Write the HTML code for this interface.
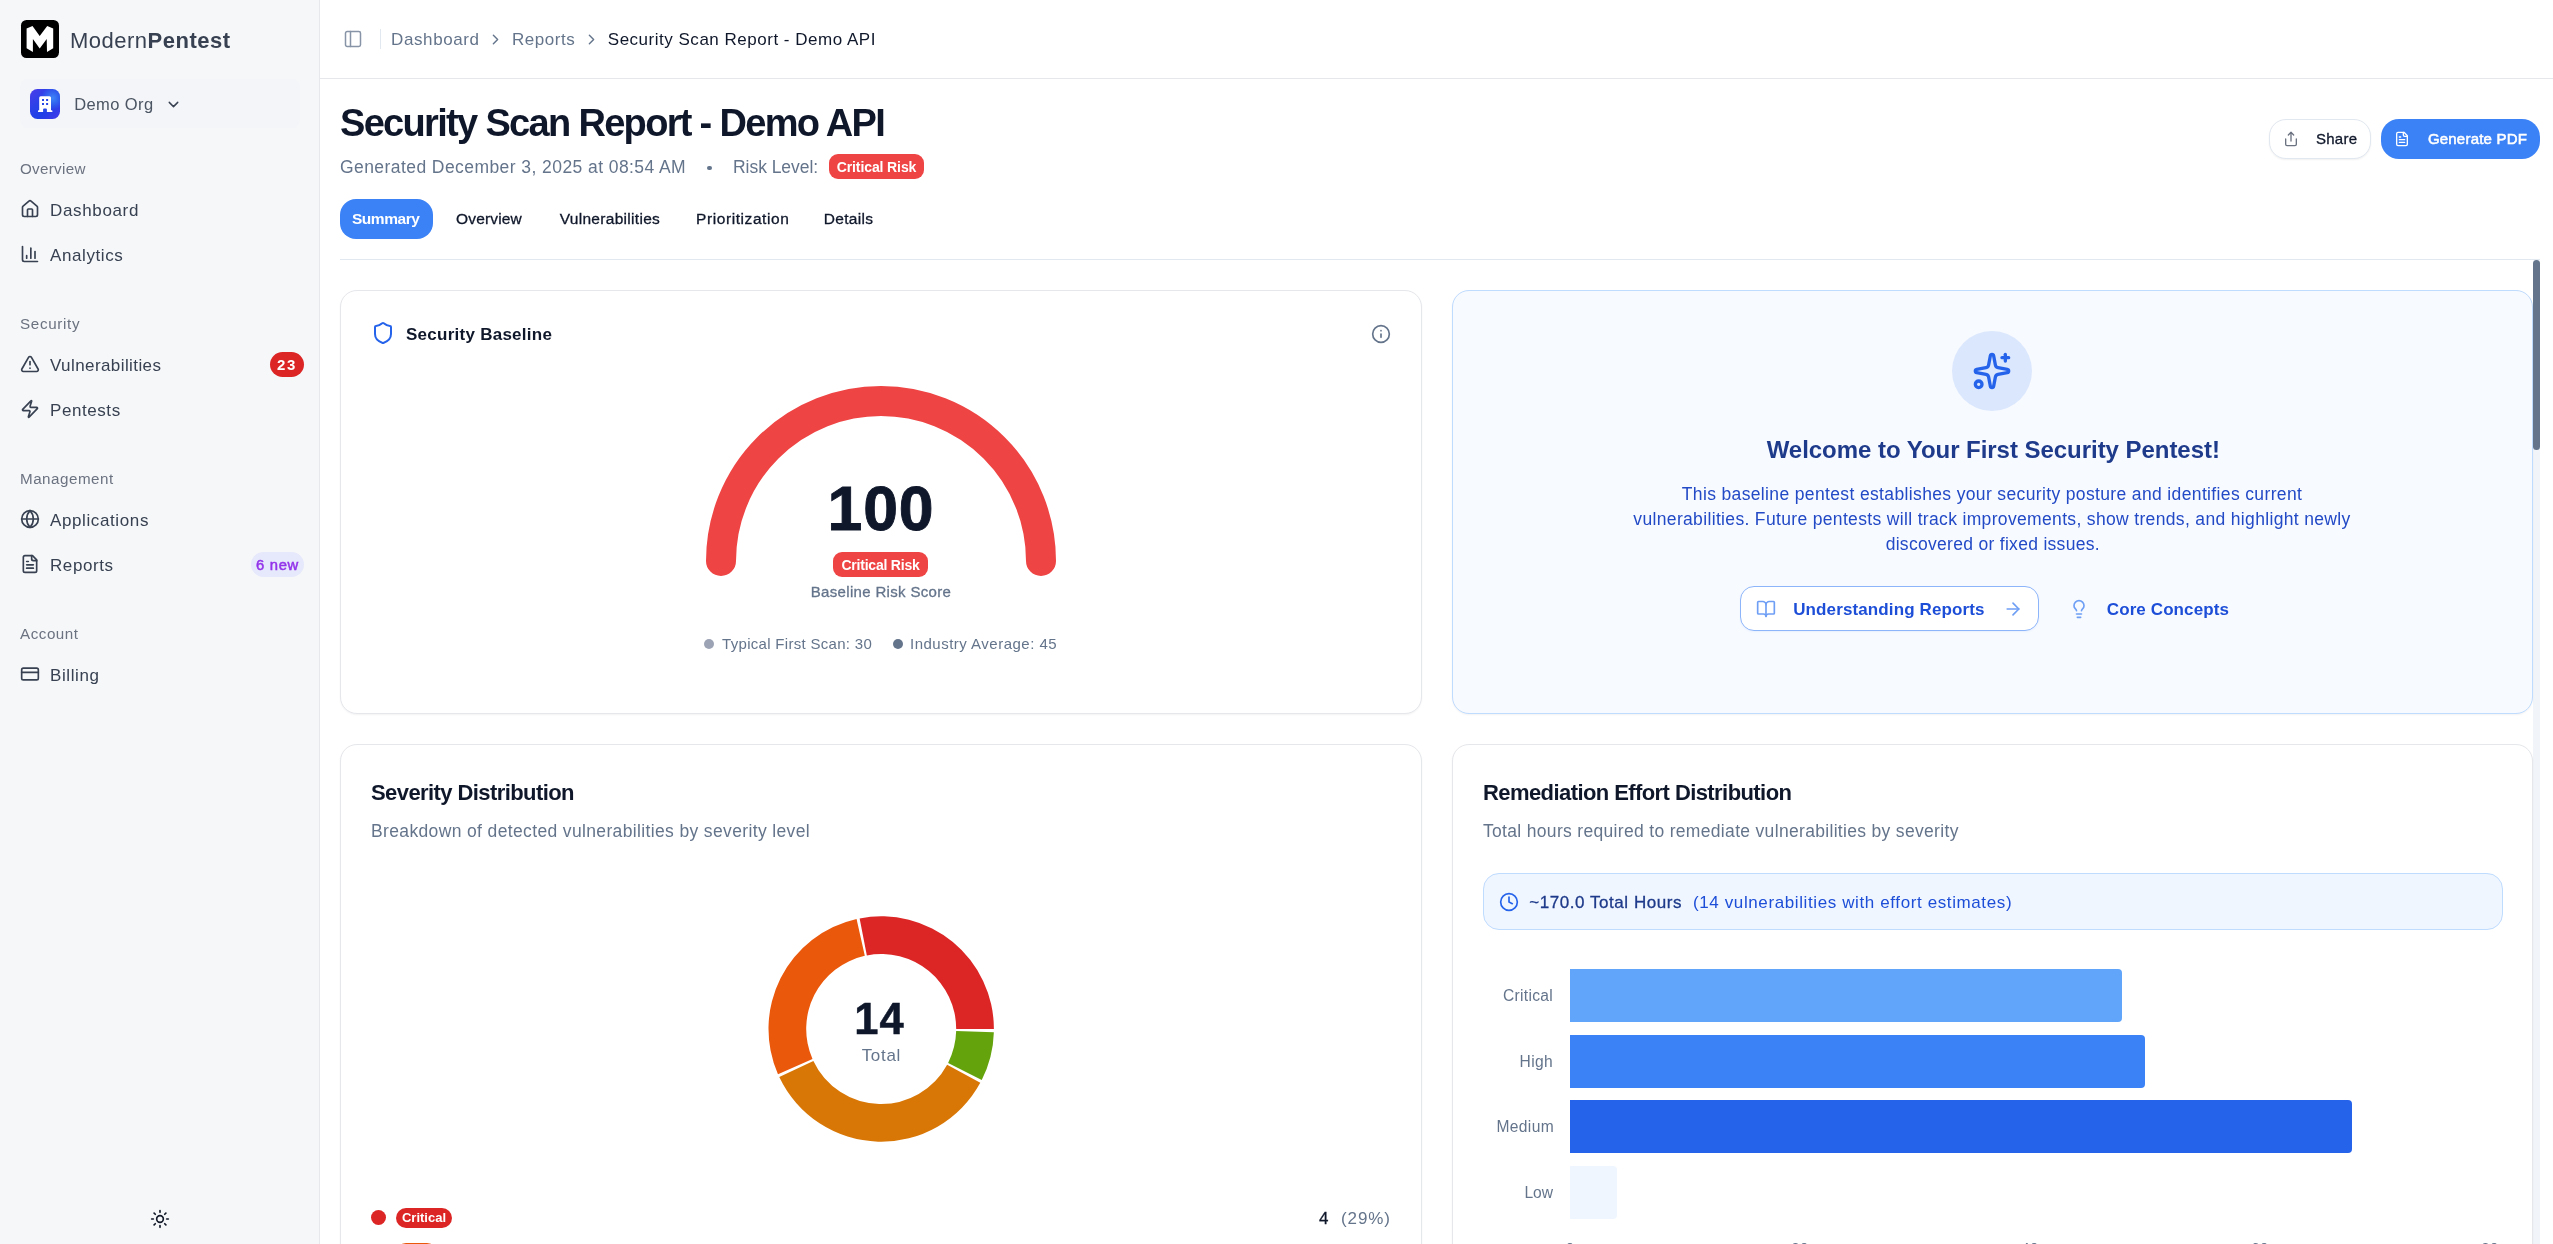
<!DOCTYPE html>
<html lang="en">
<head>
<meta charset="utf-8">
<title>Security Scan Report - Demo API</title>
<style>
*{box-sizing:border-box;margin:0;padding:0}
html,body{width:2553px;height:1244px;overflow:hidden;background:#fff}
body{font-family:"Liberation Sans",sans-serif;color:#0f172a;position:relative}
.abs{position:absolute}
.t{position:absolute;white-space:nowrap}
svg{display:block;overflow:visible}
#sidebar{position:absolute;left:0;top:0;width:320px;height:1244px;background:#f6f7f9;border-right:1px solid #e6e8ec}
.card{position:absolute;background:#fff;border:1px solid #e5e7eb;border-radius:17px;box-shadow:0 1px 2px rgba(15,23,42,.05)}
.pill{position:absolute;border-radius:999px}
</style>
</head>
<body>
<div id="root" style="position:absolute;left:0;top:0;width:2553px;height:1244px;will-change:transform;background:#fff">

<div id="sidebar">
<div class="abs" style="left:21px;top:20px;width:38px;height:38px;border-radius:5.500px;background:#000"></div>
<svg class="abs" style="left:0;top:0" width="80" height="70" viewBox="0 0 80 70"><path d="M26.600 28.500L32.500 26 39.700 36 47.200 26 53.200 28.500V48.200L47 52 46.700 39.100 39.700 48.600 32.900 39.100V52L26.600 48.200Z" fill="#fff"/></svg>
<div class="t" id="logo" style="left:70px;top:22.7px;height:35px;line-height:35px;font-size:22px;letter-spacing:0.5px;color:#374151">Modern<b>Pentest</b></div>
<div class="abs" style="left:20px;top:79px;width:280px;height:49px;border-radius:8px;background:#f4f5f8"></div>
<div class="abs" style="left:30px;top:89px;width:30px;height:30px;border-radius:7.500px;background:radial-gradient(circle at 76% 30%,#3f86f7 0,rgba(63,134,247,0) 38%),linear-gradient(135deg,#4b3cea 0%,#2a41e8 38%,#1f3fe6 62%,#4538ea 100%)"></div>
<svg class="abs" style="left:30px;top:89px" width="30" height="30" viewBox="0 0 30 30"><path d="M9.200 8.700a1.500 1.500 0 0 1 1.500-1.500h8.800a1.500 1.500 0 0 1 1.500 1.500V21.300h.8a.6.6 0 0 1 .6.600V23H8v-1.100a.6.6 0 0 1 .6-.6h.6z" fill="#fff"/><path d="M12 10h2v2h-2zM16.100 10h2v2h-2zM12 13.900h2v2h-2zM16.100 13.900h2v2h-2zM13.100 20.400a1 1 0 0 1 1-1h1.800a1 1 0 0 1 1 1V23h-3.800z" fill="#2646e6"/></svg>
<div class="t" id="org" style="left:74.2px;top:90.7px;height:26px;line-height:26px;font-size:16.5px;letter-spacing:0.41px;color:#4b5563">Demo Org</div>
<svg class="abs" style="left:164.7px;top:96.2px" width="17" height="17" viewBox="0 0 24 24" fill="none" stroke="#374151" stroke-width="2" stroke-linecap="round" stroke-linejoin="round"><path d="m6 9 6 6 6-6"/></svg>
<div class="t" id="g1" style="left:20px;top:157.3px;height:24px;line-height:24px;font-size:15.2px;letter-spacing:0.3px;color:#6b7280">Overview</div>
<div class="t" id="g2" style="left:20px;top:312.3px;height:24px;line-height:24px;font-size:15.2px;letter-spacing:0.66px;color:#6b7280">Security</div>
<div class="t" id="g3" style="left:20px;top:467.3px;height:24px;line-height:24px;font-size:15.2px;letter-spacing:0.5px;color:#6b7280">Management</div>
<div class="t" id="g4" style="left:20px;top:622.3px;height:24px;line-height:24px;font-size:15.2px;letter-spacing:0.52px;color:#6b7280">Account</div>
<svg class="abs" style="left:20px;top:199.0px" width="20" height="20" viewBox="0 0 24 24" fill="none" stroke="#374151" stroke-width="2" stroke-linecap="round" stroke-linejoin="round"><path d="M15 21v-8a1 1 0 0 0-1-1h-4a1 1 0 0 0-1 1v8"/><path d="M3 10a2 2 0 0 1 .709-1.528l7-5.999a2 2 0 0 1 2.582 0l7 5.999A2 2 0 0 1 21 10v9a2 2 0 0 1-2 2H5a2 2 0 0 1-2-2z"/></svg>
<div class="t" id="n1" style="left:50px;top:196.5px;height:27px;line-height:27px;font-size:17px;letter-spacing:0.65px;color:#374151">Dashboard</div>
<svg class="abs" style="left:20px;top:244.0px" width="20" height="20" viewBox="0 0 24 24" fill="none" stroke="#374151" stroke-width="2" stroke-linecap="round" stroke-linejoin="round"><path d="M3 3v16a2 2 0 0 0 2 2h16"/><path d="M18 17V9"/><path d="M13 17V5"/><path d="M8 17v-3"/></svg>
<div class="t" id="n2" style="left:50px;top:241.5px;height:27px;line-height:27px;font-size:17px;letter-spacing:0.59px;color:#374151">Analytics</div>
<svg class="abs" style="left:20px;top:354.0px" width="20" height="20" viewBox="0 0 24 24" fill="none" stroke="#374151" stroke-width="2" stroke-linecap="round" stroke-linejoin="round"><path d="m21.730 18-8-14a2 2 0 0 0-3.480 0l-8 14A2 2 0 0 0 4 21h16a2 2 0 0 0 1.730-3"/><path d="M12 9v4"/><path d="M12 17h.01"/></svg>
<div class="t" id="n3" style="left:50px;top:351.5px;height:27px;line-height:27px;font-size:17px;letter-spacing:0.41px;color:#374151">Vulnerabilities</div>
<svg class="abs" style="left:20px;top:399.0px" width="20" height="20" viewBox="0 0 24 24" fill="none" stroke="#374151" stroke-width="2" stroke-linecap="round" stroke-linejoin="round"><path d="M4 14a1 1 0 0 1-.78-1.630l9.900-10.200a.5.5 0 0 1 .86.460l-1.920 6.020A1 1 0 0 0 13 10h7a1 1 0 0 1 .78 1.630l-9.900 10.200a.5.5 0 0 1-.86-.460l1.920-6.020A1 1 0 0 0 11 14z"/></svg>
<div class="t" id="n4" style="left:50px;top:396.5px;height:27px;line-height:27px;font-size:17px;letter-spacing:0.57px;color:#374151">Pentests</div>
<svg class="abs" style="left:20px;top:509.0px" width="20" height="20" viewBox="0 0 24 24" fill="none" stroke="#374151" stroke-width="2" stroke-linecap="round" stroke-linejoin="round"><circle cx="12" cy="12" r="10"/><path d="M12 2a14.500 14.500 0 0 0 0 20 14.500 14.500 0 0 0 0-20"/><path d="M2 12h20"/></svg>
<div class="t" id="n5" style="left:50px;top:506.5px;height:27px;line-height:27px;font-size:17px;letter-spacing:0.61px;color:#374151">Applications</div>
<svg class="abs" style="left:20px;top:554.0px" width="20" height="20" viewBox="0 0 24 24" fill="none" stroke="#374151" stroke-width="2" stroke-linecap="round" stroke-linejoin="round"><path d="M15 2H6a2 2 0 0 0-2 2v16a2 2 0 0 0 2 2h12a2 2 0 0 0 2-2V7Z"/><path d="M14 2v4a2 2 0 0 0 2 2h4"/><path d="M10 9H8"/><path d="M16 13H8"/><path d="M16 17H8"/></svg>
<div class="t" id="n6" style="left:50px;top:551.5px;height:27px;line-height:27px;font-size:17px;letter-spacing:0.58px;color:#374151">Reports</div>
<svg class="abs" style="left:20px;top:664.0px" width="20" height="20" viewBox="0 0 24 24" fill="none" stroke="#374151" stroke-width="2" stroke-linecap="round" stroke-linejoin="round"><rect width="20" height="14" x="2" y="5" rx="2"/><path d="M2 10h20"/></svg>
<div class="t" id="n7" style="left:50px;top:661.5px;height:27px;line-height:27px;font-size:17px;letter-spacing:0.6px;color:#374151">Billing</div>
<div class="pill" style="left:270px;top:352px;width:34px;height:25px;background:#dc2626"></div>
<div class="t" id="bd23" style="left:270px;top:352.5px;height:24px;line-height:24px;font-size:15px;letter-spacing:1.6px;color:#fff;width:34px;text-align:center;font-weight:700">23</div>
<div class="pill" style="left:251px;top:552px;width:53px;height:25px;background:#e6e8fb"></div>
<div class="t" id="bd6" style="left:251px;top:552.5px;height:24px;line-height:24px;font-size:14.8px;letter-spacing:0.7px;color:#9333ea;width:53px;text-align:center;-webkit-text-stroke:.3px currentColor;-webkit-text-stroke:.5px currentColor">6 new</div>
<svg class="abs" style="left:150px;top:1209px" width="20" height="20" viewBox="0 0 24 24" fill="none" stroke="#111827" stroke-width="2" stroke-linecap="round" stroke-linejoin="round"><circle cx="12" cy="12" r="4"/><path d="M12 2v2"/><path d="M12 20v2"/><path d="m4.930 4.930 1.410 1.410"/><path d="m17.660 17.660 1.410 1.410"/><path d="M2 12h2"/><path d="M20 12h2"/><path d="m6.340 17.660-1.410 1.410"/><path d="m19.070 4.930-1.410 1.410"/></svg>
</div>
<div class="abs" style="left:320px;top:78px;width:2233px;height:1px;background:#e5e7eb"></div>
<svg class="abs" style="left:343px;top:29px" width="20" height="20" viewBox="0 0 24 24" fill="none" stroke="#8793a6" stroke-width="1.8" stroke-linecap="round" stroke-linejoin="round"><rect width="18" height="18" x="3" y="3" rx="2"/><path d="M9 3v18"/></svg>
<div class="abs" style="left:380px;top:29px;width:1px;height:20px;background:#e2e8f0"></div>
<div class="t" id="b1" style="left:391px;top:25.5px;height:27px;line-height:27px;font-size:17px;letter-spacing:0.61px;color:#64748b">Dashboard</div>
<svg class="abs" style="left:487px;top:31px" width="17" height="17" viewBox="0 0 24 24" fill="none" stroke="#64748b" stroke-width="2" stroke-linecap="round" stroke-linejoin="round"><path d="m9 18 6-6-6-6"/></svg>
<div class="t" id="b2" style="left:512px;top:25.5px;height:27px;line-height:27px;font-size:17px;letter-spacing:0.55px;color:#64748b">Reports</div>
<svg class="abs" style="left:582.5px;top:31px" width="17" height="17" viewBox="0 0 24 24" fill="none" stroke="#64748b" stroke-width="2" stroke-linecap="round" stroke-linejoin="round"><path d="m9 18 6-6-6-6"/></svg>
<div class="t" id="b3" style="left:607.8px;top:25.5px;height:27px;line-height:27px;font-size:17px;letter-spacing:0.51px;color:#0f172a">Security Scan Report - Demo API</div>
<div class="t" id="title" style="left:340px;top:97.6px;height:50px;line-height:50px;font-size:38px;letter-spacing:-1.68px;color:#0f172a;font-weight:700">Security Scan Report - Demo API</div>
<div class="t" id="sub1" style="left:340px;top:153px;height:28px;line-height:28px;font-size:17.5px;letter-spacing:0.43px;color:#64748b">Generated December 3, 2025 at 08:54 AM</div>
<div class="abs" style="left:707.300px;top:165.800px;width:4.400px;height:4.400px;border-radius:50%;background:#64748b"></div>
<div class="t" id="sub2" style="left:733px;top:153px;height:28px;line-height:28px;font-size:17.5px;letter-spacing:-0.05px;color:#64748b">Risk Level:</div>
<div class="abs" style="left:829px;top:154px;width:95px;height:25px;border-radius:9px;background:#ef4444"></div>
<div class="t" id="crit1" style="left:829px;top:155.5px;height:22px;line-height:22px;font-size:14px;letter-spacing:-0.11px;color:#fff;width:95px;text-align:center;font-weight:700">Critical Risk</div>
<div class="abs" style="left:2269px;top:119px;width:102px;height:40px;border:1px solid #e2e8f0;border-radius:17px;background:#fff;box-shadow:0 1px 2px rgba(15,23,42,.06)"></div>
<svg class="abs" style="left:2282.7px;top:130.5px" width="16" height="16" viewBox="0 0 24 24" fill="none" stroke="#6b7280" stroke-width="2" stroke-linecap="round" stroke-linejoin="round"><path d="M4 12v8a2 2 0 0 0 2 2h12a2 2 0 0 0 2-2v-8"/><path d="m16 6-4-4-4 4"/><path d="M12 2v13"/></svg>
<div class="t" id="share" style="left:2316px;top:127px;height:24px;line-height:24px;font-size:15px;letter-spacing:0.25px;color:#0f172a;-webkit-text-stroke:.3px currentColor">Share</div>
<div class="abs" style="left:2381px;top:119px;width:159px;height:40px;border-radius:18px;background:#3b82f6"></div>
<svg class="abs" style="left:2394px;top:130.6px" width="16" height="16" viewBox="0 0 24 24" fill="none" stroke="#fff" stroke-width="2" stroke-linecap="round" stroke-linejoin="round"><path d="M15 2H6a2 2 0 0 0-2 2v16a2 2 0 0 0 2 2h12a2 2 0 0 0 2-2V7Z"/><path d="M14 2v4a2 2 0 0 0 2 2h4"/><path d="M10 9H8"/><path d="M16 13H8"/><path d="M16 17H8"/></svg>
<div class="t" id="gen" style="left:2427.9px;top:127px;height:24px;line-height:24px;font-size:15px;letter-spacing:0.21px;color:#fff;-webkit-text-stroke:.3px currentColor;-webkit-text-stroke:.55px currentColor">Generate PDF</div>
<div class="abs" style="left:340px;top:199px;width:93px;height:40px;border-radius:16px;background:#3b82f6"></div>
<div class="t" id="tab1" style="left:352px;top:205.5px;height:25px;line-height:25px;font-size:15.5px;letter-spacing:-0.47px;color:#fff;font-weight:700">Summary</div>
<div class="t" id="tab2" style="left:456px;top:205.5px;height:25px;line-height:25px;font-size:15.5px;letter-spacing:0.16px;color:#0f172a;-webkit-text-stroke:.3px currentColor">Overview</div>
<div class="t" id="tab3" style="left:559.7px;top:205.5px;height:25px;line-height:25px;font-size:15.5px;letter-spacing:0.3px;color:#0f172a;-webkit-text-stroke:.3px currentColor">Vulnerabilities</div>
<div class="t" id="tab4" style="left:696px;top:205.5px;height:25px;line-height:25px;font-size:15.5px;letter-spacing:0.58px;color:#0f172a;-webkit-text-stroke:.3px currentColor">Prioritization</div>
<div class="t" id="tab5" style="left:823.7px;top:205.5px;height:25px;line-height:25px;font-size:15.5px;letter-spacing:0.33px;color:#0f172a;-webkit-text-stroke:.3px currentColor">Details</div>
<div class="abs" style="left:340px;top:259px;width:2200px;height:1px;background:#e2e8f0"></div>
<div class="abs" style="left:2533px;top:260px;width:7px;height:984px;background:#f1f5f9"></div>
<div class="card" style="left:340px;top:290px;width:1082px;height:424px"></div>
<svg class="abs" style="left:371px;top:321px" width="24" height="24" viewBox="0 0 24 24" fill="none" stroke="#2563eb" stroke-width="2" stroke-linecap="round" stroke-linejoin="round"><path d="M20 13c0 5-3.500 7.500-7.660 8.950a1 1 0 0 1-.67-.010C7.500 20.500 4 18 4 13V6a1 1 0 0 1 1-1c2 0 4.500-1.200 6.240-2.720a1.170 1.170 0 0 1 1.520 0C14.510 3.810 17 5 19 5a1 1 0 0 1 1 1z"/></svg>
<div class="t" id="sbt" style="left:406px;top:320.5px;height:27px;line-height:27px;font-size:17px;letter-spacing:0.26px;color:#0f172a;font-weight:700">Security Baseline</div>
<svg class="abs" style="left:1370.5px;top:324px" width="20" height="20" viewBox="0 0 24 24" fill="none" stroke="#64748b" stroke-width="2" stroke-linecap="round" stroke-linejoin="round"><circle cx="12" cy="12" r="10"/><path d="M12 16v-4"/><path d="M12 8h.01"/></svg>
<svg class="abs" style="left:681px;top:371px" width="400" height="220" viewBox="0 0 400 220"><path d="M40 190A160 160 0 0 1 360 190" fill="none" stroke="#ef4444" stroke-width="30" stroke-linecap="round"/></svg>
<div class="t" id="g100" style="left:781px;top:467.5px;height:80px;line-height:80px;font-size:62.5px;letter-spacing:0.85px;color:#0f172a;width:200px;text-align:center;font-weight:700;-webkit-text-stroke:.9px currentColor">100</div>
<div class="abs" style="left:833px;top:552px;width:95px;height:25px;border-radius:9px;background:#ef4444"></div>
<div class="t" id="crit2" style="left:833px;top:553.5px;height:22px;line-height:22px;font-size:14px;letter-spacing:-0.21px;color:#fff;width:95px;text-align:center;font-weight:700">Critical Risk</div>
<div class="t" id="brs" style="left:781px;top:580px;height:24px;line-height:24px;font-size:15px;letter-spacing:0.33px;color:#64748b;width:200px;text-align:center;-webkit-text-stroke:.3px currentColor">Baseline Risk Score</div>
<div class="abs" style="left:704px;top:638.500px;width:10px;height:10px;border-radius:50%;background:#9ca3b4"></div>
<div class="t" id="lg1" style="left:722.1px;top:632px;height:24px;line-height:24px;font-size:15px;letter-spacing:0.3px;color:#64748b">Typical First Scan: 30</div>
<div class="abs" style="left:893px;top:638.500px;width:10px;height:10px;border-radius:50%;background:#64748b"></div>
<div class="t" id="lg2" style="left:910px;top:632px;height:24px;line-height:24px;font-size:15px;letter-spacing:0.49px;color:#64748b">Industry Average: 45</div>
<div class="card" style="left:1452px;top:290px;width:1081px;height:424px;background:#f7faff;border-color:#bfdbfe"></div>
<div class="abs" style="left:1952px;top:331px;width:80px;height:80px;border-radius:50%;background:#dbe7fd"></div>
<svg class="abs" style="left:1972px;top:351px" width="40" height="40" viewBox="0 0 24 24" fill="none" stroke="#2563eb" stroke-width="2" stroke-linecap="round" stroke-linejoin="round"><path d="M11.017 2.814a1 1 0 0 1 1.966 0l1.051 5.558a2 2 0 0 0 1.594 1.594l5.558 1.051a1 1 0 0 1 0 1.966l-5.558 1.051a2 2 0 0 0-1.594 1.594l-1.051 5.558a1 1 0 0 1-1.966 0l-1.051-5.558a2 2 0 0 0-1.594-1.594l-5.558-1.051a1 1 0 0 1 0-1.966l5.558-1.051a2 2 0 0 0 1.594-1.594z"/><path d="M20 2v4"/><path d="M22 4h-4"/><circle cx="4" cy="20" r="2"/></svg>
<div class="t" id="wel" style="left:1693.3px;top:433.2px;height:34px;line-height:34px;font-size:24px;letter-spacing:-0.04px;color:#1e3a8a;width:600px;text-align:center;font-weight:700">Welcome to Your First Security Pentest!</div>
<div class="t" id="p1" style="left:1592px;top:480px;height:28px;line-height:28px;font-size:17.5px;letter-spacing:0.36px;color:#2249c6;width:800px;text-align:center">This baseline pentest establishes your security posture and identifies current</div>
<div class="t" id="p2" style="left:1592px;top:505px;height:28px;line-height:28px;font-size:17.5px;letter-spacing:0.34px;color:#2249c6;width:800px;text-align:center">vulnerabilities. Future pentests will track improvements, show trends, and highlight newly</div>
<div class="t" id="p3" style="left:1592.8px;top:529.5px;height:28px;line-height:28px;font-size:17.5px;letter-spacing:0.3px;color:#2249c6;width:800px;text-align:center">discovered or fixed issues.</div>
<div class="abs" style="left:1740px;top:586px;width:299px;height:45px;border:1px solid #8db5fa;border-radius:14px;background:#fff;box-shadow:0 1px 2px rgba(37,99,235,.06)"></div>
<svg class="abs" style="left:1756px;top:599px" width="20" height="20" viewBox="0 0 24 24" fill="none" stroke="#6f9ff5" stroke-width="2" stroke-linecap="round" stroke-linejoin="round"><path d="M12 7v14"/><path d="M3 18a1 1 0 0 1-1-1V4a1 1 0 0 1 1-1h5a4 4 0 0 1 4 4 4 4 0 0 1 4-4h5a1 1 0 0 1 1 1v13a1 1 0 0 1-1 1h-6a3 3 0 0 0-3 3 3 3 0 0 0-3-3z"/></svg>
<div class="t" id="ur" style="left:1793.2px;top:595.5px;height:27px;line-height:27px;font-size:17px;letter-spacing:0.12px;color:#1d4ed8;font-weight:700">Understanding Reports</div>
<svg class="abs" style="left:2003px;top:599px" width="20" height="20" viewBox="0 0 24 24" fill="none" stroke="#6f9ff5" stroke-width="2" stroke-linecap="round" stroke-linejoin="round"><path d="M5 12h14"/><path d="m12 5 7 7-7 7"/></svg>
<svg class="abs" style="left:2069px;top:599px" width="20" height="20" viewBox="0 0 24 24" fill="none" stroke="#6f9ff5" stroke-width="2" stroke-linecap="round" stroke-linejoin="round"><path d="M15 14c.2-1 .7-1.700 1.500-2.500 1-.9 1.500-2.200 1.500-3.500A6 6 0 0 0 6 8c0 1 .2 2.200 1.500 3.500.7.7 1.300 1.500 1.500 2.500"/><path d="M9 18h6"/><path d="M10 22h4"/></svg>
<div class="t" id="cc" style="left:2106.8px;top:595.5px;height:27px;line-height:27px;font-size:17px;letter-spacing:0.1px;color:#1d4ed8;font-weight:700">Core Concepts</div>
<div class="card" style="left:340px;top:744px;width:1082px;height:560px"></div>
<div class="t" id="sdt" style="left:371px;top:777.2px;height:32px;line-height:32px;font-size:22px;letter-spacing:-0.58px;color:#0f172a;font-weight:700">Severity Distribution</div>
<div class="t" id="sds" style="left:371px;top:816.7px;height:28px;line-height:28px;font-size:17.5px;letter-spacing:0.36px;color:#64748b">Breakdown of detected vulnerabilities by severity level</div>
<svg class="abs" style="left:0;top:0" width="2553" height="1244" viewBox="0 0 2553 1244"><path d="M993.90 1029.00A112.7 112.7 0 0 0 859.64 918.38L866.85 955.39A75 75 0 0 1 956.20 1029.00Z" fill="#dc2626"/><path d="M856.56 919.03A112.7 112.7 0 0 0 777.97 1074.22L812.50 1059.09A75 75 0 0 1 864.80 955.81Z" fill="#ea580c"/><path d="M779.27 1077.09A112.7 112.7 0 0 0 980.28 1082.70L947.14 1064.74A75 75 0 0 1 813.37 1061.00Z" fill="#d97706"/><path d="M981.74 1079.91A112.7 112.7 0 0 0 993.86 1032.15L956.17 1031.09A75 75 0 0 1 948.11 1062.88Z" fill="#65a30d"/></svg>
<div class="t" id="d14" style="left:779.5px;top:991.5px;height:54px;line-height:54px;font-size:43.5px;letter-spacing:1.0px;color:#0f172a;width:200px;text-align:center;font-weight:700;-webkit-text-stroke:.5px currentColor">14</div>
<div class="t" id="dtot" style="left:781.4px;top:1041.5px;height:27px;line-height:27px;font-size:17px;letter-spacing:0.7px;color:#64748b;width:200px;text-align:center">Total</div>
<div class="abs" style="left:371px;top:1210px;width:15px;height:15px;border-radius:50%;background:#dc2626"></div>
<div class="pill" style="left:396px;top:1208px;width:56px;height:20px;background:#dc2626"></div>
<div class="t" id="lcrit" style="left:396px;top:1206.7px;height:21px;line-height:21px;font-size:13px;letter-spacing:0px;color:#fff;width:56px;text-align:center;font-weight:700">Critical</div>
<div class="t" id="c4" style="left:1319px;top:1204.5px;height:27px;line-height:27px;font-size:17px;letter-spacing:0px;color:#0f172a;-webkit-text-stroke:.3px currentColor">4</div>
<div class="t" id="c29" style="left:1341px;top:1204.5px;height:27px;line-height:27px;font-size:17px;letter-spacing:0.88px;color:#64748b">(29%)</div>
<div class="pill" style="left:396px;top:1243px;width:41px;height:20px;background:#ea580c"></div>
<div class="card" style="left:1452px;top:744px;width:1081px;height:560px"></div>
<div class="t" id="ret" style="left:1483px;top:777.2px;height:32px;line-height:32px;font-size:22px;letter-spacing:-0.58px;color:#0f172a;font-weight:700">Remediation Effort Distribution</div>
<div class="t" id="res" style="left:1483px;top:816.7px;height:28px;line-height:28px;font-size:17.5px;letter-spacing:0.32px;color:#64748b">Total hours required to remediate vulnerabilities by severity</div>
<div class="abs" style="left:1483px;top:873px;width:1020px;height:57px;border:1px solid #bfdbfe;border-radius:16px;background:#eff6ff"></div>
<svg class="abs" style="left:1498.7px;top:891.5px" width="20" height="20" viewBox="0 0 24 24" fill="none" stroke="#2563eb" stroke-width="2" stroke-linecap="round" stroke-linejoin="round"><circle cx="12" cy="12" r="10"/><path d="M12 6v6l4 2"/></svg>
<div class="t" id="th" style="left:1529.2px;top:888.5px;height:27px;line-height:27px;font-size:17px;letter-spacing:0.56px;color:#1e3a8a;-webkit-text-stroke:.3px currentColor">~170.0 Total Hours</div>
<div class="t" id="th2" style="left:1693px;top:888.5px;height:27px;line-height:27px;font-size:17px;letter-spacing:0.61px;color:#1d4ed8">(14 vulnerabilities with effort estimates)</div>
<div class="t" id="y1" style="left:1353px;top:983px;height:25px;line-height:25px;font-size:15.6px;letter-spacing:0.29px;color:#64748b;width:200px;text-align:right">Critical</div>
<div class="t" id="y2" style="left:1353px;top:1048.5px;height:25px;line-height:25px;font-size:15.6px;letter-spacing:0.33px;color:#64748b;width:200px;text-align:right">High</div>
<div class="t" id="y3" style="left:1354.0px;top:1114px;height:25px;line-height:25px;font-size:15.6px;letter-spacing:0.34px;color:#64748b;width:200px;text-align:right">Medium</div>
<div class="t" id="y4" style="left:1353px;top:1180px;height:25px;line-height:25px;font-size:15.6px;letter-spacing:0px;color:#64748b;width:200px;text-align:right">Low</div>
<div class="abs" style="left:1570px;top:969px;width:552px;height:52.500px;border-radius:0 4px 4px 0;background:#60a5fa"></div>
<div class="abs" style="left:1570px;top:1035px;width:575px;height:52.500px;border-radius:0 4px 4px 0;background:#3b82f6"></div>
<div class="abs" style="left:1570px;top:1100px;width:782px;height:52.500px;border-radius:0 4px 4px 0;background:#2563eb"></div>
<div class="abs" style="left:1570px;top:1166px;width:46.5px;height:52.500px;border-radius:0 4px 4px 0;background:#eff6ff"></div>
<div class="t" id="ax0" style="left:1520px;top:1235.5px;height:24px;line-height:24px;font-size:15px;letter-spacing:0.3px;color:#64748b;width:100px;text-align:center">0</div>
<div class="t" id="ax20" style="left:1750px;top:1235.5px;height:24px;line-height:24px;font-size:15px;letter-spacing:0.3px;color:#64748b;width:100px;text-align:center">20</div>
<div class="t" id="ax40" style="left:1980px;top:1235.5px;height:24px;line-height:24px;font-size:15px;letter-spacing:0.3px;color:#64748b;width:100px;text-align:center">40</div>
<div class="t" id="ax60" style="left:2210px;top:1235.5px;height:24px;line-height:24px;font-size:15px;letter-spacing:0.3px;color:#64748b;width:100px;text-align:center">60</div>
<div class="t" id="ax80" style="left:2440px;top:1235.5px;height:24px;line-height:24px;font-size:15px;letter-spacing:0.3px;color:#64748b;width:100px;text-align:center">80</div>
<div class="abs" style="left:2533px;top:260px;width:7px;height:190px;border-radius:4px;background:#64748b"></div>
</div>
</body>
</html>
